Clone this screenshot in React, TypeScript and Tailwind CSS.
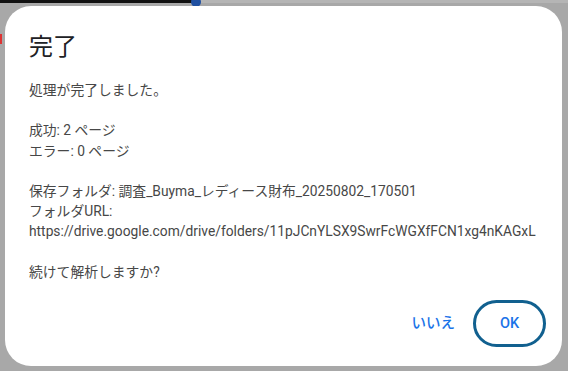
export default function App() {
  const lines: (string | null)[] = [
    "処理が完了しました。",
    null,
    "成功: 2 ページ",
    "エラー: 0 ページ",
    null,
    "保存フォルダ: 調査_Buyma_レディース財布_20250802_170501",
    "フォルダURL:",
    "https://drive.google.com/drive/folders/11pJCnYLSX9SwrFcWGXfFCN1xg4nKAGxL",
    null,
    "続けて解析しますか?",
  ];

  return (
    <div
      className="relative w-[568px] h-[371px] overflow-hidden bg-[#a8a8a8]"
      style={{ fontFamily: 'Roboto, "Noto Sans CJK JP", sans-serif' }}
    >
      {/* background progress line */}
      <div className="absolute left-0 top-0 w-full h-[3px] bg-[#b5b5b5]" />
      <div className="absolute left-0 top-0 w-[194px] h-[3px] bg-[#111]" />
      <div className="absolute left-[191px] top-[-3px] w-[10px] h-[10px] rounded-full bg-[#1f4fa0]" />
      <div className="absolute left-0 top-[34px] w-[2px] h-[10px] bg-[#d33]" />

      <div className="absolute left-[5px] top-[6px] w-[557px] h-[360px] rounded-[26px] bg-white flex flex-col pl-6 pr-4 pb-[19px]">
        <h1
          className="mt-[25px] text-[24px] leading-[28px] text-[#202124] font-normal"
          style={{ fontFamily: '"Noto Sans CJK JP", sans-serif' }}
        >
          完了
        </h1>
        <div className="mt-[21px] text-[13.8px] leading-[20.2px] text-[#474747]">
          {lines.map((l, i) =>
            l === null ? <div key={i} className="h-[20.2px]" /> : <div key={i}>{l}</div>
          )}
        </div>
        <div className="mt-auto flex items-center justify-end gap-[10px]">
          <button className="text-[14.5px] font-medium text-[#1a73e8] px-2 h-[36px]">いいえ</button>
          <button className="w-[73px] h-[47px] rounded-full border-[3px] border-[#11608f] text-[14.5px] font-medium text-[#1a73e8]">
            OK
          </button>
        </div>
      </div>
    </div>
  );
}
